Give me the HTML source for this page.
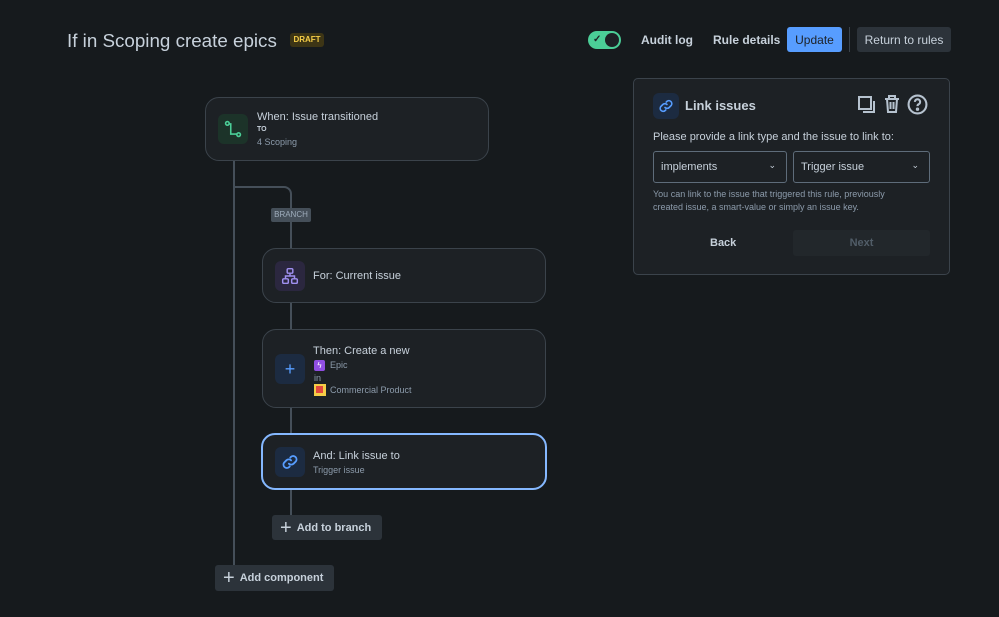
<!DOCTYPE html>
<html><head><meta charset="utf-8"><style>
*{box-sizing:border-box;margin:0;padding:0}
body{width:999px;height:617px;background:#161a1d;font-family:"Liberation Sans",sans-serif;color:#b6c2cf;position:relative;overflow:hidden}
.a{position:absolute}
.card{position:absolute;background:#1d2125;border:1px solid #3b434b;border-radius:14px}
.ic{position:absolute;width:30px;height:30px;border-radius:6px;display:flex;align-items:center;justify-content:center}
.t{position:absolute;font-size:11px;color:#c7d1db;white-space:nowrap}
.s{position:absolute;font-size:9px;color:#8c9bab;white-space:nowrap}
.line{position:absolute;background:#454f59}
.btn{position:absolute;background:#2c333a;border-radius:3px;color:#c7d1db;font-weight:bold;font-size:11px;display:flex;align-items:center}
.fb{display:flex;align-items:center;justify-content:center}
</style></head><body>
<div class="a" style="left:67px;top:30px;font-size:18.8px;color:#c7d1db;">If in Scoping create epics</div>
<div class="a" style="left:290px;top:33px;width:34px;height:14px;background:#3d3515;border-radius:3px;color:#f5cd47;font-size:8px;font-weight:bold;text-align:center;line-height:14px">DRAFT</div>

<div class="a" style="left:588px;top:31px;width:33px;height:18px;border-radius:9px;background:#4bce97"></div>
<div class="a" style="left:605px;top:33px;width:14px;height:14px;border-radius:7px;background:#1d2125"></div>
<div class="a" style="left:593px;top:34px;font-size:10px;color:#1d2125;font-weight:bold">✓</div>
<div class="a" style="left:641px;top:33px;font-size:12px;color:#c7d1db;font-weight:bold">Audit log</div>
<div class="a" style="left:713px;top:33px;font-size:12px;color:#c7d1db;font-weight:bold">Rule details</div>
<div class="a fb" style="left:787px;top:27px;width:55px;height:25px;background:#579dff;border-radius:3px;color:#1d2125;font-size:12px">Update</div>
<div class="a" style="left:849px;top:27px;width:1px;height:25px;background:#3b434b"></div>
<div class="a fb" style="left:857px;top:27px;width:94px;height:25px;background:#2c333a;border-radius:3px;color:#c7d1db;font-size:12px">Return to rules</div>

<div class="line" style="left:233px;top:161px;width:2px;height:404px"></div>
<div class="a" style="left:234px;top:186px;width:58px;height:30px;border-top:2px solid #454f59;border-right:2px solid #454f59;border-top-right-radius:8px"></div>
<div class="line" style="left:290px;top:216px;width:2px;height:300px"></div>
<div class="a" style="left:271px;top:208px;width:40px;height:14px;background:#454f59;border-radius:2px;font-size:8px;color:#9fadbc;text-align:center;line-height:14px">BRANCH</div>

<div class="card" style="left:205px;top:97px;width:284px;height:64px">
 <div class="ic" style="left:12px;top:16px;background:#1c3329"><svg width="18" height="18" viewBox="0 0 16 16" fill="none" stroke="#4bce97" stroke-width="1.4"><circle cx="3" cy="3" r="1.6"/><circle cx="13" cy="13" r="1.6"/><path d="M4.5 3.5 H6 V12.5 H11.4"/></svg></div>
 <div class="t" style="left:51px;top:13px">When: Issue transitioned</div>
 <div class="s" style="left:51px;top:28px;font-size:7px;font-weight:bold;color:#c7d1db">TO</div>
 <div class="s" style="left:51px;top:39px">4 Scoping</div>
</div>
<div class="card" style="left:262px;top:248px;width:284px;height:55px">
 <div class="ic" style="left:12px;top:12px;background:#2b273f"><svg width="18" height="18" viewBox="0 0 16 16" fill="none" stroke="#9f8fef" stroke-width="1.3"><rect x="5.5" y="1.5" width="5" height="4" rx="1"/><rect x="1.5" y="10.5" width="5" height="4" rx="1"/><rect x="9.5" y="10.5" width="5" height="4" rx="1"/><path d="M8 5.5V8M4 10.5V8H12V10.5"/></svg></div>
 <div class="t" style="left:50px;top:21px">For: Current issue</div>
</div>
<div class="card" style="left:262px;top:329px;width:284px;height:79px">
 <div class="ic" style="left:12px;top:24px;background:#1c2b41;color:#579dff;font-size:18px">+</div>
 <div class="t" style="left:50px;top:15px">Then: Create a new</div>
 <div class="a" style="left:51px;top:30px;width:11px;height:11px;background:#904ee2;border-radius:2px;color:#fff;font-size:8px;text-align:center;line-height:11px">ϟ</div>
 <div class="s" style="left:67px;top:30px">Epic</div>
 <div class="s" style="left:51px;top:43px">in</div>
 <div class="a" style="left:51px;top:54px;width:12px;height:12px;background:#f5cd47"><div style="margin:2px;width:7px;height:7px;background:#e2483d"></div></div>
 <div class="s" style="left:67px;top:55px">Commercial Product</div>
</div>
<div class="card" style="left:261px;top:433px;width:286px;height:57px;border:2px solid #85b8ff">
 <div class="ic" style="left:12px;top:12px;background:#1c2b41"><svg width="18" height="18" viewBox="0 0 16 16" fill="none" stroke="#579dff" stroke-width="1.6" stroke-linecap="round"><path d="M7 9.5a3 3 0 0 0 4.2 0l2-2a3 3 0 0 0-4.2-4.2l-.8.8"/><path d="M9 6.5a3 3 0 0 0-4.2 0l-2 2a3 3 0 0 0 4.2 4.2l.8-.8"/></svg></div>
 <div class="t" style="left:50px;top:15px">And: Link issue to</div>
 <div class="s" style="left:50px;top:30px">Trigger issue</div>
</div>
<div class="btn" style="left:272px;top:515px;width:110px;height:25px"><span style="font-size:20px;font-weight:normal;margin:0 5px 0 8px;line-height:20px">+</span>Add to branch</div>
<div class="btn" style="left:215px;top:565px;width:119px;height:26px"><span style="font-size:20px;font-weight:normal;margin:0 5px 0 8px;line-height:20px">+</span>Add component</div>

<div class="a" style="left:633px;top:78px;width:317px;height:197px;background:#1d2125;border:1px solid #3b434b;border-radius:5px">
 <div class="ic" style="left:19px;top:14px;width:26px;height:26px;background:#1c2b41"><svg width="16" height="16" viewBox="0 0 16 16" fill="none" stroke="#579dff" stroke-width="1.6" stroke-linecap="round"><path d="M7 9.5a3 3 0 0 0 4.2 0l2-2a3 3 0 0 0-4.2-4.2l-.8.8"/><path d="M9 6.5a3 3 0 0 0-4.2 0l-2 2a3 3 0 0 0 4.2 4.2l.8-.8"/></svg></div>
 <div class="a" style="left:51px;top:19px;font-size:13px;font-weight:bold;color:#c7d1db">Link issues</div>
 <svg class="a" style="left:223px;top:16px" width="20" height="20" viewBox="0 0 20 20" fill="none" stroke="#b6c2cf" stroke-width="2"><rect x="2" y="2" width="12" height="12"/><path d="M17 6v11H6"/></svg>
 <svg class="a" style="left:248px;top:15px" width="20" height="20" viewBox="0 0 20 20" fill="none" stroke="#b6c2cf" stroke-width="2"><path d="M3 5h14M7 5V2h6v3M5 5l1 13h8l1-13M8.5 8v7M11.5 8v7"/></svg>
 <svg class="a" style="left:273px;top:15px" width="21" height="21" viewBox="0 0 20 20" fill="none" stroke="#b6c2cf" stroke-width="2"><circle cx="10" cy="10" r="8.5"/><path d="M7.5 7.5a2.5 2.5 0 1 1 3.5 2.3c-.7.4-1 .9-1 1.7"/><circle cx="10" cy="14.5" r=".6" fill="#b6c2cf"/></svg>
 <div class="a" style="left:19px;top:52px;font-size:11px;color:#c7d1db">Please provide a link type and the issue to link to:</div>
 <div class="a" style="left:19px;top:72px;width:134px;height:32px;border:1px solid #5e6c7a;border-radius:3px;background:#1d2125;font-size:11px;color:#c7d1db;padding:9px 7px">implements<span style="position:absolute;right:10px;top:8px;font-size:9px">⌄</span></div>
 <div class="a" style="left:159px;top:72px;width:137px;height:32px;border:1px solid #5e6c7a;border-radius:3px;background:#1d2125;font-size:11px;color:#c7d1db;padding:9px 7px">Trigger issue<span style="position:absolute;right:10px;top:8px;font-size:9px">⌄</span></div>
 <div class="a" style="left:19px;top:109px;font-size:9px;color:#8c9bab;line-height:13px;width:255px">You can link to the issue that triggered this rule, previously created issue, a smart-value or simply an issue key.</div>
 <div class="a" style="left:76px;top:158px;font-size:11px;font-weight:bold;color:#c7d1db">Back</div>
 <div class="a" style="left:159px;top:151px;width:137px;height:26px;background:#22272b;border-radius:3px;font-size:11px;font-weight:bold;color:#515d68;text-align:center;line-height:26px">Next</div>
</div>
</body></html>
